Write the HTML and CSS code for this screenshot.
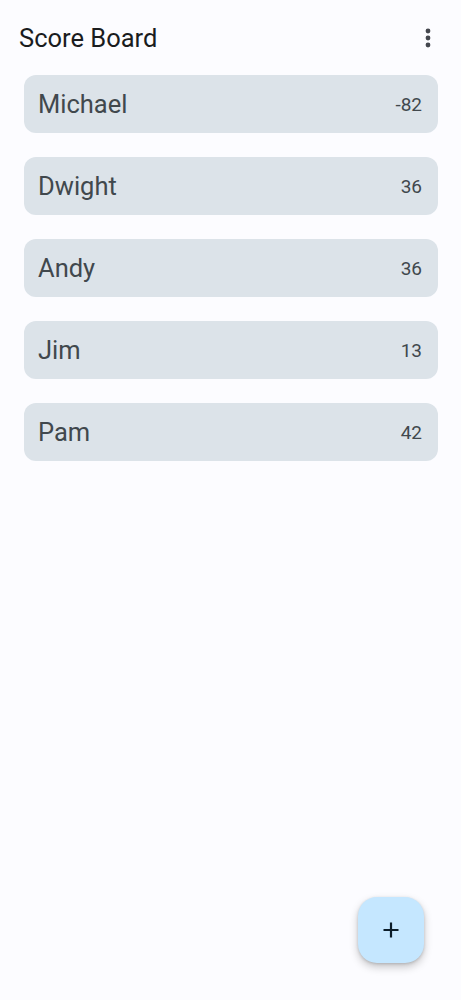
FILE: index.html
```html
<!DOCTYPE html>
<html lang="en">
<head>
    <meta charset="UTF-8">
    <meta name="viewport" content="width=device-width, initial-scale=1.0">
    <title>Score Board</title>
    <link rel="stylesheet" href="styles.css">
</head>
<body>
    <div class="app">
        <div class="top-bar">
            <div class="app-title">Score Board</div>
            <button class="menu-button" aria-label="More">
                <svg width="6" height="20" viewBox="0 0 6 20">
                    <circle cx="3" cy="3" r="2.4" fill="#44474e"/>
                    <circle cx="3" cy="10" r="2.4" fill="#44474e"/>
                    <circle cx="3" cy="17" r="2.4" fill="#44474e"/>
                </svg>
            </button>
        </div>

        <div class="player-list">
            <div class="player-card"><span class="player-name">Michael</span><span class="player-score">-82</span></div>
            <div class="player-card"><span class="player-name">Dwight</span><span class="player-score">36</span></div>
            <div class="player-card"><span class="player-name">Andy</span><span class="player-score">36</span></div>
            <div class="player-card"><span class="player-name">Jim</span><span class="player-score">13</span></div>
            <div class="player-card"><span class="player-name">Pam</span><span class="player-score">42</span></div>
        </div>

        <button class="fab" aria-label="Add player">
            <svg width="18" height="18" viewBox="0 0 18 18">
                <path d="M9 1.5v15M1.5 9h15" stroke="#0b1d29" stroke-width="2.2" fill="none"/>
            </svg>
        </button>
    </div>
</body>
</html>
```

FILE: styles.css
```css
body, html {
    margin: 0;
    padding: 0;
    height: 100%;
    width: 100%;
    font-family: Roboto, "Liberation Sans", Arial, sans-serif;
    background-color: #fcfcff;
    overflow: hidden;
}

.app {
    display: flex;
    flex-direction: column;
    height: 100vh;
    width: 100%;
}

/* top bar */
.top-bar {
    display: flex;
    align-items: center;
    justify-content: space-between;
    height: 75px;
    padding: 0 30px 0 19px;
    box-sizing: border-box;
}

.app-title {
    font-size: 25.5px;
    color: #1a1c1e;
    padding-top: 1px;
}

.menu-button {
    border: none;
    background: none;
    padding: 0;
    display: flex;
    cursor: pointer;
}

/* player rows */
.player-list {
    display: flex;
    flex-direction: column;
    gap: 24px;
    padding: 0 23.5px;
}

.player-card {
    display: flex;
    align-items: center;
    justify-content: space-between;
    height: 58px;
    padding: 0 15.5px 0 14.5px;
    background-color: #dce3e9;
    border-radius: 12px;
}

.player-name {
    font-size: 25.5px;
    color: #41484d;
}

.player-score {
    font-size: 19px;
    color: #41484d;
}

/* add button */
.fab {
    margin: auto 37px 37px auto;
    width: 66px;
    height: 66px;
    border: none;
    border-radius: 19px;
    background-color: #c5e7ff;
    display: flex;
    align-items: center;
    justify-content: center;
    box-shadow: 0 4px 8px rgba(0,0,0,0.22), 0 1px 3px rgba(0,0,0,0.15);
    cursor: pointer;
}
```
